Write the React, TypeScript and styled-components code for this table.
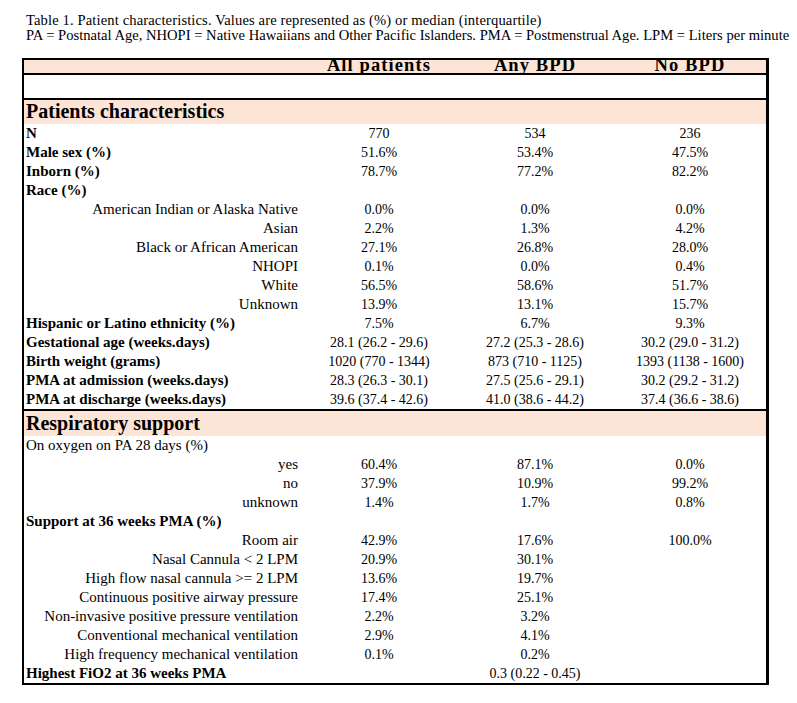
import React from "react";
import styled, { createGlobalStyle } from "styled-components";

const GlobalStyle = createGlobalStyle`
  html, body { margin: 0; padding: 0; background: #ffffff; }
  body { font-family: "Liberation Serif", "Times New Roman", serif; color: #000; }
`;

const Page = styled.div`
  padding: 13px 0 0 22px;
  width: 775px;
`;

const Caption = styled.div`
  padding-left: 4px;
  margin-bottom: 16px;
`;

const CaptionLine = styled.div<{ $spacing?: number }>`
  font-size: 14.6px;
  line-height: 14.5px;
  white-space: nowrap;
  letter-spacing: ${(p) => p.$spacing ?? 0}px;
`;

const Table = styled.div`
  width: 747px;
  box-sizing: border-box;
  border: 2px solid #000;
  border-right-width: 3px;
  display: grid;
  grid-template-columns: 278px 154px 158px 152px;
`;

const HeadCell = styled.div`
  height: 13px;
  background: #fce4d6;
  font-size: 18.5px;
  font-weight: 700;
  line-height: 10px;
  text-align: center;
  white-space: nowrap;
  letter-spacing: 1.1px;
  border-bottom: 2px solid #000;
`;

const BlankRow = styled.div`
  grid-column: 1 / -1;
  height: 23px;
  border-bottom: 2px solid #000;
`;

const SectionTitle = styled.div<{ $topLine?: boolean }>`
  grid-column: 1 / -1;
  height: 24px;
  background: #fce4d6;
  font-size: 20px;
  font-weight: 700;
  line-height: 23px;
  padding-left: 2px;
  white-space: nowrap;
  ${(p) => (p.$topLine ? "border-top: 2px solid #000; height: 25px; line-height: 25px;" : "")}
`;

const Label = styled.div<{ $sub?: boolean; $bold?: boolean }>`
  height: 19px;
  font-size: 15px;
  line-height: 19px;
  white-space: nowrap;
  font-weight: ${(p) => (p.$bold ? 700 : 400)};
  text-align: ${(p) => (p.$sub ? "right" : "left")};
  padding: ${(p) => (p.$sub ? "0 4px 0 0" : "0 0 0 2px")};
`;

const Value = styled.div`
  height: 19px;
  font-size: 14px;
  line-height: 19px;
  text-align: center;
  white-space: nowrap;
`;

type Row = { label: string; sub?: boolean; bold?: boolean; values?: string[] };

const patients: Row[] = [
  { label: "N", bold: true, values: ["770", "534", "236"] },
  { label: "Male sex (%)", bold: true, values: ["51.6%", "53.4%", "47.5%"] },
  { label: "Inborn (%)", bold: true, values: ["78.7%", "77.2%", "82.2%"] },
  { label: "Race (%)", bold: true },
  { label: "American Indian or Alaska Native", sub: true, values: ["0.0%", "0.0%", "0.0%"] },
  { label: "Asian", sub: true, values: ["2.2%", "1.3%", "4.2%"] },
  { label: "Black or African American", sub: true, values: ["27.1%", "26.8%", "28.0%"] },
  { label: "NHOPI", sub: true, values: ["0.1%", "0.0%", "0.4%"] },
  { label: "White", sub: true, values: ["56.5%", "58.6%", "51.7%"] },
  { label: "Unknown", sub: true, values: ["13.9%", "13.1%", "15.7%"] },
  { label: "Hispanic or Latino ethnicity (%)", bold: true, values: ["7.5%", "6.7%", "9.3%"] },
  { label: "Gestational age (weeks.days)", bold: true, values: ["28.1 (26.2 - 29.6)", "27.2 (25.3 - 28.6)", "30.2 (29.0 - 31.2)"] },
  { label: "Birth weight (grams)", bold: true, values: ["1020 (770 - 1344)", "873 (710 - 1125)", "1393 (1138 - 1600)"] },
  { label: "PMA at admission (weeks.days)", bold: true, values: ["28.3 (26.3 - 30.1)", "27.5 (25.6 - 29.1)", "30.2 (29.2 - 31.2)"] },
  { label: "PMA at discharge (weeks.days)", bold: true, values: ["39.6 (37.4 - 42.6)", "41.0 (38.6 - 44.2)", "37.4 (36.6 - 38.6)"] },
];

const respiratory: Row[] = [
  { label: "On oxygen on PA 28 days (%)" },
  { label: "yes", sub: true, values: ["60.4%", "87.1%", "0.0%"] },
  { label: "no", sub: true, values: ["37.9%", "10.9%", "99.2%"] },
  { label: "unknown", sub: true, values: ["1.4%", "1.7%", "0.8%"] },
  { label: "Support at 36 weeks PMA (%)", bold: true },
  { label: "Room air", sub: true, values: ["42.9%", "17.6%", "100.0%"] },
  { label: "Nasal Cannula < 2 LPM", sub: true, values: ["20.9%", "30.1%", ""] },
  { label: "High flow nasal cannula >= 2 LPM", sub: true, values: ["13.6%", "19.7%", ""] },
  { label: "Continuous positive airway pressure", sub: true, values: ["17.4%", "25.1%", ""] },
  { label: "Non-invasive positive pressure ventilation", sub: true, values: ["2.2%", "3.2%", ""] },
  { label: "Conventional mechanical ventilation", sub: true, values: ["2.9%", "4.1%", ""] },
  { label: "High frequency mechanical ventilation", sub: true, values: ["0.1%", "0.2%", ""] },
  { label: "Highest FiO2 at 36 weeks PMA", bold: true, values: ["", "0.3 (0.22 - 0.45)", ""] },
];

const renderRows = (rows: Row[]) =>
  rows.map((r) => {
    const vals = r.values ?? ["", "", ""];
    return (
      <React.Fragment key={r.label}>
        <Label $sub={r.sub} $bold={r.bold}>
          {r.label}
        </Label>
        {vals.map((v, i) => (
          <Value key={i}>{v}</Value>
        ))}
      </React.Fragment>
    );
  });

export default function App() {
  return (
    <>
      <GlobalStyle />
      <Page>
        <Caption>
          <CaptionLine $spacing={0.12}>
            Table 1. Patient characteristics. Values are represented as (%) or median (interquartile)
          </CaptionLine>
          <CaptionLine>
            PA = Postnatal Age, NHOPI = Native Hawaiians and Other Pacific Islanders. PMA = Postmenstrual Age. LPM =
            Liters per minute
          </CaptionLine>
        </Caption>
        <Table>
          <HeadCell />
          <HeadCell>All patients</HeadCell>
          <HeadCell>Any BPD</HeadCell>
          <HeadCell>No BPD</HeadCell>
          <BlankRow />
          <SectionTitle>Patients characteristics</SectionTitle>
          {renderRows(patients)}
          <SectionTitle $topLine>Respiratory support</SectionTitle>
          {renderRows(respiratory)}
        </Table>
      </Page>
    </>
  );
}
